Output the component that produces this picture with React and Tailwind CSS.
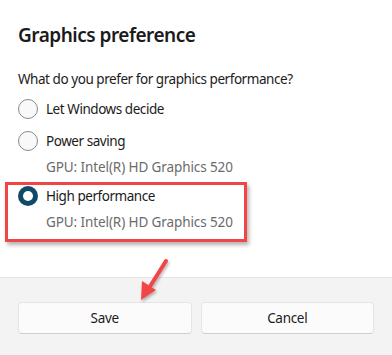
import React from "react";

function Radio({ checked }) {
  if (checked) {
    return (
      <span className="box-border flex h-[20px] w-[20px] shrink-0 items-center justify-center rounded-full bg-[#0f4a6b]">
        <span className="h-[10px] w-[10px] rounded-full bg-white" />
      </span>
    );
  }
  return <span className="box-border block h-[20px] w-[20px] shrink-0 rounded-full border border-[#8a8a8a] bg-[#f9f9f9]" />;
}

const txt = "text-[13.5px] leading-[20px] tracking-[-0.45px]";
const gpu = "text-[13.5px] leading-[20px] tracking-[-0.1px] text-[#6b6b6b]";

export default function App() {
  return (
    <div className="relative h-[355px] w-[392px] overflow-hidden bg-white text-[#1b1b1b]" style={{ fontFamily: '"Noto Sans", sans-serif' }}>
      <div className="h-[277px] px-[18px] pt-[21px]">
        <h1 className="text-[19px] font-semibold leading-[28px] tracking-[-0.5px]">Graphics preference</h1>
        <p className={"mt-[20px] " + txt}>What do you prefer for graphics performance?</p>
        <div className="mt-[10px] flex items-center gap-[8px]">
          <Radio />
          <span className={txt}>Let Windows decide</span>
        </div>
        <div className="mt-[12px] flex items-center gap-[8px]">
          <Radio />
          <span className={txt}>Power saving</span>
        </div>
        <div className={"mt-[6px] pl-[28px] " + gpu}>GPU: Intel(R) HD Graphics 520</div>
        <div className="mt-[9px] flex items-center gap-[8px]">
          <Radio checked />
          <span className={txt}>High performance</span>
        </div>
        <div className={"mt-[6px] pl-[28px] " + gpu}>GPU: Intel(R) HD Graphics 520</div>
      </div>
      <div className="h-[78px] border-t border-[#e5e5e5] bg-[#f3f3f3] px-[18px] pt-[24px]">
        <div className="flex gap-[9px]">
          <button className="h-[32px] flex-1 rounded-[4px] border border-[#e5e5e5] border-b-[#d0d0d0] bg-[#fbfbfb] text-[13.5px] tracking-[-0.3px] text-[#1b1b1b]">Save</button>
          <button className="h-[32px] flex-1 rounded-[4px] border border-[#e5e5e5] border-b-[#d0d0d0] bg-[#fbfbfb] text-[13.5px] tracking-[-0.3px] text-[#1b1b1b]">Cancel</button>
        </div>
      </div>
      <div className="absolute left-[5px] top-[182px] h-[60px] w-[242px] border-[3px] border-[#f24545] shadow-[2px_3px_4px_rgba(0,0,0,0.3)]" />
      <svg className="absolute left-0 top-0" width="392" height="355" viewBox="0 0 392 355">
        <defs>
          <filter id="sh" x="-50%" y="-50%" width="200%" height="200%">
            <feDropShadow dx="1" dy="2" stdDeviation="1.5" floodColor="#000" floodOpacity="0.3" />
          </filter>
        </defs>
        <g filter="url(#sh)">
          <line x1="166" y1="261" x2="149" y2="288" stroke="#f24545" strokeWidth="4" strokeLinecap="round" />
          <polygon points="141,300 142,281 156,290" fill="#f24545" />
        </g>
      </svg>
    </div>
  );
}
